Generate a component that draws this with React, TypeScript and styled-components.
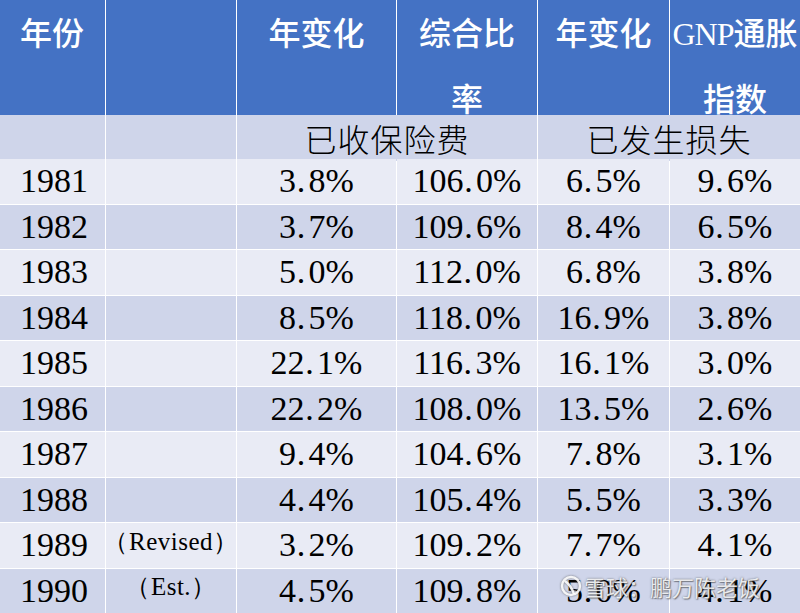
import React from "react";
import styled, { createGlobalStyle } from "styled-components";

const Global = createGlobalStyle`
  html, body { margin: 0; padding: 0; background: #ffffff; }
  body { width: 800px; height: 613px; overflow: hidden; }
`;

const COLS = "105px 130px 159px 140px 131px 130px";

const Table = styled.div`
  position: relative;
  width: 800px;
  height: 613px;
  display: flex;
  flex-direction: column;
  gap: 1px;
  background: #ffffff;
  overflow: hidden;
`;

const Row = styled.div<{ $h: number; $extraGap?: number }>`
  display: grid;
  grid-template-columns: ${COLS};
  column-gap: 1px;
  height: ${(p) => p.$h}px;
  margin-bottom: ${(p) => p.$extraGap ?? 0}px;
  flex: none;
`;

const HeadCell = styled.div<{ $align?: "left" | "center" }>`
  background: #4472c4;
  color: #ffffff;
  font-family: "Liberation Serif", "Noto Sans CJK SC", sans-serif;
  font-size: 32px;
  line-height: 63px;
  text-align: ${(p) => (p.$align === "left" ? "left" : "center")};
  padding-left: ${(p) => (p.$align === "left" ? "20px" : "0")};
  white-space: nowrap;
  overflow: visible;
`;

const Latin = styled.span`
  font-family: "Liberation Serif", serif;
  letter-spacing: -1px;
`;

const Cjk = styled.span`
  font-family: "Noto Sans CJK SC", sans-serif;
  font-weight: 500;
`;

const Cell = styled.div<{ $tone: "dark" | "light"; $align?: "left" | "center"; $span?: number }>`
  background: ${(p) => (p.$tone === "dark" ? "#cfd5ea" : "#e9ebf5")};
  color: #000000;
  display: flex;
  align-items: center;
  justify-content: ${(p) => (p.$align === "left" ? "flex-start" : "center")};
  padding-left: ${(p) => (p.$align === "left" ? "20px" : "0")};
  grid-column: span ${(p) => p.$span ?? 1};
  white-space: nowrap;
`;

const Value = styled.span`
  font-family: "Liberation Serif", serif;
  font-size: 34px;
  line-height: 40px;
`;

const GroupLabel = styled.span`
  font-family: "Noto Sans CJK SC", sans-serif;
  font-weight: 300;
  font-size: 32px;
  letter-spacing: 1px;
`;

const Note = styled.span`
  font-family: "Liberation Serif", serif;
  font-size: 25px;
  letter-spacing: 0.5px;
  margin-top: -8px;
`;

const Dot = styled.span`
  padding: 0 0.1em 0 0.02em;
`;

const Watermark = styled.div`
  position: absolute;
  left: 560px;
  top: 574px;
  display: flex;
  align-items: center;
  gap: 2px;
  color: rgba(255, 255, 255, 0.85);
  font-family: "Noto Sans CJK SC", sans-serif;
  font-size: 22px;
  line-height: 24px;
  text-shadow: 0 0 2px rgba(60, 60, 60, 0.7), 1px 1px 1px rgba(60, 60, 60, 0.5);
  pointer-events: none;
`;

const Num = ({ v }: { v: string }) => {
  const i = v.indexOf(".");
  if (i < 0) return <Value>{v}</Value>;
  return (
    <Value>
      {v.slice(0, i)}
      <Dot>.</Dot>
      {v.slice(i + 1)}
    </Value>
  );
};

const data: [string, string, string, string, string, string][] = [
  ["1981", "", "3.8%", "106.0%", "6.5%", "9.6%"],
  ["1982", "", "3.7%", "109.6%", "8.4%", "6.5%"],
  ["1983", "", "5.0%", "112.0%", "6.8%", "3.8%"],
  ["1984", "", "8.5%", "118.0%", "16.9%", "3.8%"],
  ["1985", "", "22.1%", "116.3%", "16.1%", "3.0%"],
  ["1986", "", "22.2%", "108.0%", "13.5%", "2.6%"],
  ["1987", "", "9.4%", "104.6%", "7.8%", "3.1%"],
  ["1988", "", "4.4%", "105.4%", "5.5%", "3.3%"],
  ["1989", "（Revised）", "3.2%", "109.2%", "7.7%", "4.1%"],
  ["1990", "（Est.）", "4.5%", "109.8%", "5.0%", "4.1%"],
];

const Logo = () => (
  <svg width="22" height="22" viewBox="0 0 22 22" style={{ filter: "drop-shadow(0 0 1px rgba(60,60,60,0.7))" }}>
    <circle cx="11" cy="11" r="9" fill="none" stroke="rgba(255,255,255,0.9)" strokeWidth="2.4" />
    <path d="M5 6 C9 9 12 13 14 19" fill="none" stroke="rgba(255,255,255,0.9)" strokeWidth="2.4" />
  </svg>
);

export default function App() {
  return (
    <>
      <Global />
      <Table>
        <Row $h={112} $extraGap={2}>
          <HeadCell $align="left"><Cjk>年份</Cjk></HeadCell>
          <HeadCell />
          <HeadCell><Cjk>年变化</Cjk></HeadCell>
          <HeadCell><Cjk>综合比</Cjk><br /><Cjk>率</Cjk></HeadCell>
          <HeadCell><Cjk>年变化</Cjk></HeadCell>
          <HeadCell><Latin>GNP</Latin><Cjk>通胀</Cjk><br /><Cjk>指数</Cjk></HeadCell>
        </Row>
        <Row $h={43}>
          <Cell $tone="dark" />
          <Cell $tone="dark" />
          <Cell $tone="dark" $span={2}><GroupLabel>已收保险费</GroupLabel></Cell>
          <Cell $tone="dark" $span={2}><GroupLabel>已发生损失</GroupLabel></Cell>
        </Row>
        {data.map((r, idx) => {
          const tone = idx % 2 === 0 ? "light" : "dark";
          return (
            <Row key={r[0]} $h={44.5}>
              <Cell $tone={tone} $align="left"><Value>{r[0]}</Value></Cell>
              <Cell $tone={tone}>{r[1] && <Note>{r[1]}</Note>}</Cell>
              <Cell $tone={tone}><Num v={r[2]} /></Cell>
              <Cell $tone={tone}><Num v={r[3]} /></Cell>
              <Cell $tone={tone}><Num v={r[4]} /></Cell>
              <Cell $tone={tone}><Num v={r[5]} /></Cell>
            </Row>
          );
        })}
        <Watermark>
          <Logo />
          <span>雪球：鹏万陈老饭</span>
        </Watermark>
      </Table>
    </>
  );
}
